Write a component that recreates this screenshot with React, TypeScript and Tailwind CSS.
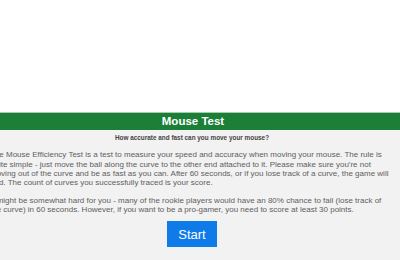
export default function App() {
  return (
    <div className="w-[400px] h-[260px] overflow-hidden bg-white font-['Liberation_Sans',Arial,sans-serif]">
      <div className="h-[112px]" />
      <div className="h-[18px] border-t border-[#a7cdb0] bg-[#1b7f37] flex items-center justify-center">
        <h1 className="text-white font-bold text-[11.5px] leading-none pr-[14px]">Mouse Test</h1>
      </div>
      <div className="bg-[#f2f2f2] h-[130px]">
        <div className="-ml-[10px] w-[404px] text-[8px] leading-[1.15] text-[#606060]">
          <p className="text-center font-bold text-[6.4px] text-[#444] pt-[4px]">
            How accurate and fast can you move your mouse?
          </p>
          <p className="mt-[9px]">
            The Mouse Efficiency Test is a test to measure your speed and accuracy when moving your mouse. The rule is
            quite simple - just move the ball along the curve to the other end attached to it. Please make sure you're not
            moving out of the curve and be as fast as you can. After 60 seconds, or if you lose track of a curve, the game will
            end. The count of curves you successfully traced is your score.
          </p>
          <p className="mt-[9px]">
            It might be somewhat hard for you - many of the rookie players would have an 80% chance to fail (lose track of
            the curve) in 60 seconds. However, if you want to be a pro-gamer, you need to score at least 30 points.
          </p>
          <div className="flex justify-center mt-[7px]">
            <button className="w-[50px] h-[26px] bg-[#0f7be8] text-white text-[13px] leading-none">Start</button>
          </div>
        </div>
      </div>
    </div>
  );
}
